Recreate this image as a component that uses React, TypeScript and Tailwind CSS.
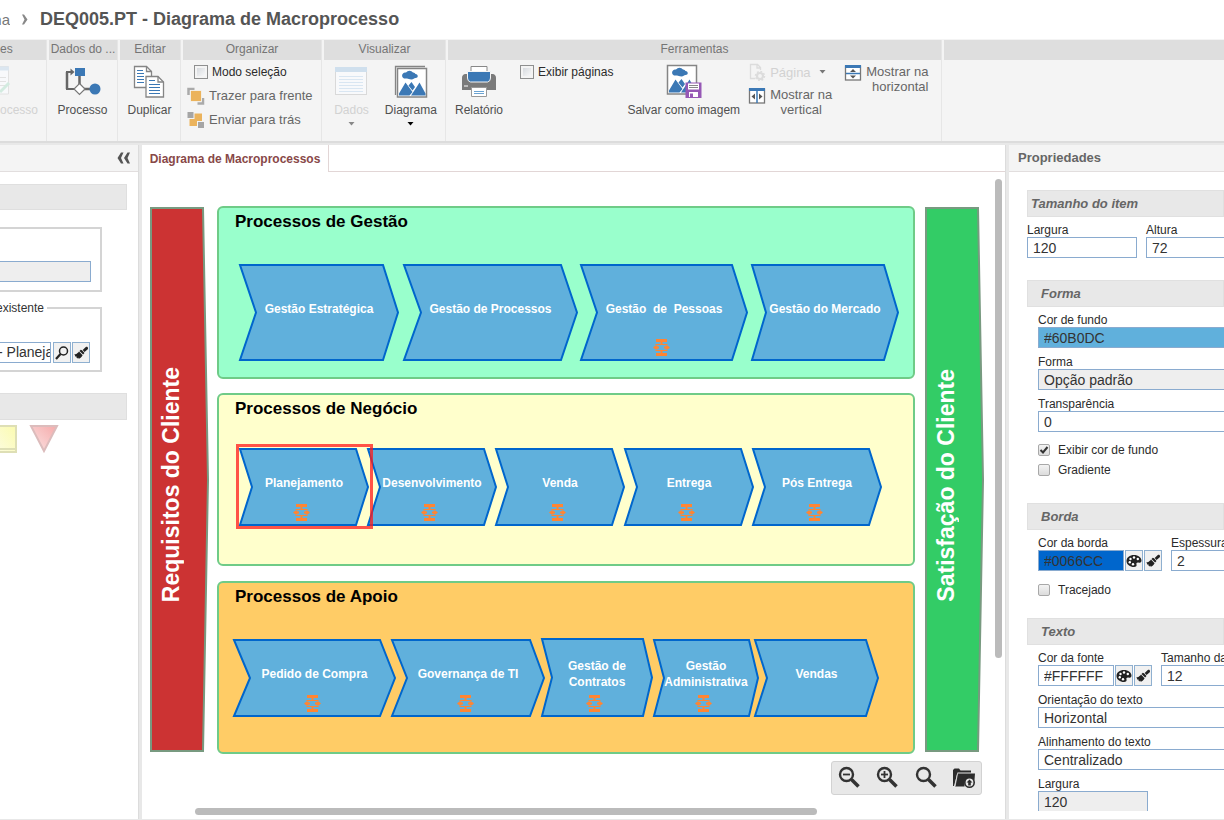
import type { ReactNode } from "react";

type ProcessNode = {
  label: string[];
  x: number;
  y: number;
  body: number;
  width: number;
  height: number;
  notch: number;
  sub?: boolean;
};

const processes: ProcessNode[] = [
  { label: ["Gestão Estratégica"], x: 97, y: 92, body: 144, width: 160, height: 97, notch: 17 },
  { label: ["Gestão de Processos"], x: 261, y: 92, body: 158, width: 175, height: 97, notch: 18 },
  { label: ["Gestão\u00a0 de\u00a0 Pessoas"], x: 438, y: 92, body: 152, width: 168, height: 97, notch: 17, sub: true },
  { label: ["Gestão do Mercado"], x: 609, y: 92, body: 133, width: 148, height: 97, notch: 15 },
  { label: ["Planejamento"], x: 97, y: 276, body: 117, width: 130, height: 78, notch: 13, sub: true },
  { label: ["Desenvolvimento"], x: 225, y: 276, body: 117, width: 130, height: 78, notch: 13, sub: true },
  { label: ["Venda"], x: 353, y: 276, body: 117, width: 130, height: 78, notch: 13, sub: true },
  { label: ["Entrega"], x: 482, y: 276, body: 117, width: 130, height: 78, notch: 13, sub: true },
  { label: ["Pós Entrega"], x: 610, y: 276, body: 117, width: 130, height: 78, notch: 13, sub: true },
  { label: ["Pedido de Compra"], x: 91, y: 467, body: 147, width: 163, height: 78, notch: 17, sub: true },
  { label: ["Governança de TI"], x: 249, y: 467, body: 139, width: 154, height: 78, notch: 16, sub: true },
  { label: ["Gestão de", "Contratos"], x: 399, y: 466, body: 102, width: 112, height: 79, notch: 11, sub: true },
  { label: ["Gestão", "Administrativa"], x: 511, y: 467, body: 96, width: 106, height: 78, notch: 11, sub: true },
  { label: ["Vendas"], x: 612, y: 467, body: 112, width: 125, height: 78, notch: 13 },
];

function SubprocessIcon() {
  return (
    <svg width="17" height="17" viewBox="0 0 17 17" aria-hidden="true">
      <g fill="#ff8533">
        <rect x="3" y="0" width="11" height="3" />
        <rect x="3" y="14" width="11" height="3" />
        <rect x="7.500" y="3" width="2" height="2" />
        <rect x="7.500" y="12" width="2" height="2" />
        <rect x="2.500" y="5" width="12" height="1" />
        <rect x="2.500" y="11" width="12" height="1" />
        <path d="M0 8.500 2.500 6.500h2V7.500H6v2H4.500v1h-2zM17 8.500l-2.500-2h-2V7.500H11v2h1.500v1h2z" />
      </g>
    </svg>
  );
}

function Process({ node }: { node: ProcessNode }) {
  const { x, y, body, width: w, height: h, notch } = node;
  return (
    <div className="absolute" style={{ left: x, top: y, width: w, height: h }}>
      <svg className="absolute inset-0 overflow-visible" width={w} height={h} aria-hidden="true">
        <polygon
          points={`1,1 ${body},1 ${w - 1},${h / 2} ${body},${h - 1} 1,${h - 1} ${notch},${h / 2}`}
          fill="#60b0dc"
          stroke="#0066cc"
          strokeWidth="2"
        />
      </svg>
      <div className="relative flex h-full flex-col items-center justify-center pb-2 text-center text-[12px] leading-4 font-bold whitespace-nowrap text-white">
        {node.label.map((line) => (
          <span key={line}>{line}</span>
        ))}
      </div>
      {node.sub && (
        <div className="absolute inset-x-0 bottom-[5px] flex justify-center pr-[5px]">
          <SubprocessIcon />
        </div>
      )}
    </div>
  );
}

function Lane({ title, className }: { title: string; className: string }) {
  return (
    <section className={`absolute left-[75px] h-[173px] w-[698px] rounded-md border-2 border-[#6fcb87] px-4 pt-1 ${className}`}>
      <h2 className="text-[17px] leading-5 font-bold text-black">{title}</h2>
    </section>
  );
}

function SideBar({ label, fill, className }: { label: string; fill: string; className: string }) {
  return (
    <div className={`absolute top-[35px] h-[546px] w-[60px] ${className}`}>
      <svg className="absolute inset-0" width="60" height="546" aria-hidden="true">
        <polygon points="1,1 53,1 58,273 53,544 1,544" fill={fill} stroke="#789a80" strokeWidth="2" />
      </svg>
      <div className="relative flex h-full w-[42px] items-center justify-center pt-[10px]">
        <span className="rotate-180 text-[23px] leading-6 font-bold whitespace-nowrap text-white [writing-mode:vertical-rl]">
          {label}
        </span>
      </div>
    </div>
  );
}

function Group({ title, className, children }: { title: string; className: string; children?: ReactNode }) {
  return (
    <section className={`flex shrink-0 flex-col overflow-hidden border-l border-[#e6e6e6] ${className}`}>
      <h2 className="ml-[2px] h-5 overflow-hidden bg-[#dedede] px-px text-center text-[12px] leading-[18px] text-ellipsis whitespace-nowrap text-[#757575]">
        {title}
      </h2>
      <div className="flex flex-1 items-start">{children}</div>
    </section>
  );
}

function BigButton({ label, icon, caret, disabled }: { label: string; icon: ReactNode; caret?: boolean; disabled?: boolean }) {
  return (
    <button type="button" disabled={disabled} className="flex flex-col items-center pt-1 text-[12px] leading-4 whitespace-nowrap text-[#505050] disabled:text-[#d2d2d2]">
      {icon}
      <span className="mt-1">{label}</span>
      {caret && <Caret className={disabled ? "mt-1 text-[#888]" : "mt-1 text-black"} />}
    </button>
  );
}

function Caret({ className }: { className: string }) {
  return (
    <svg className={className} width="7" height="4" viewBox="0 0 7 4" aria-hidden="true">
      <path d="M0.500 0h6L3.500 3.500z" fill="currentColor" />
    </svg>
  );
}

function RibbonCheck({ label }: { label: string }) {
  return (
    <label className="flex h-6 items-center gap-1 text-[12px] text-[#2b2b2b]">
      <input type="checkbox" className="size-[14px] appearance-none border border-[#8e8f8f] bg-linear-to-br from-[#cfd3d8] to-white shadow-[inset_0_0_0_2px_#f4f4f4]" />
      <span className="whitespace-nowrap">{label}</span>
    </label>
  );
}

function FlowIcon() {
  return (
    <svg width="36" height="34" viewBox="0 0 36 34" aria-hidden="true">
      <path d="M2 8v17M14.500 10v12M19 25h7" fill="none" stroke="#666" strokeWidth="2.500" />
      <path d="M1 8h5M1 25h9" fill="none" stroke="#666" strokeWidth="2" />
      <path d="M5.500 4.500 9.500 8l-4 3.500z" fill="#666" />
      <rect x="10" y="4" width="10" height="8" fill="#3b78b5" />
      <path d="M14.500 19.500 20 25l-5.500 5.500L9 25z" fill="#fff" stroke="#777" strokeWidth="1.200" />
      <circle cx="30" cy="25" r="5.500" fill="#3b78b5" />
    </svg>
  );
}

function CopyIcon() {
  return (
    <svg width="34" height="34" viewBox="0 0 34 34" aria-hidden="true">
      <g fill="#fff" stroke="#858585" strokeWidth="1.300">
        <path d="M2.500 2.500h12l5 5v16h-17z" />
        <path d="M14.500 2.500v5h5" fill="none" />
      </g>
      <path d="M5 6.500h6M5 9.500h7M5 12.500h7M5 15.500h7M5 18.500h7" stroke="#3b78b5" />
      <g fill="#fff" stroke="#858585" strokeWidth="1.300">
        <path d="M14 12.500h12l5.500 5.500v15H14z" />
        <path d="M26 12.500V18h5.500" fill="none" />
      </g>
      <path d="M17 16.500h6M17 20.500h11M17 23.500h11M17 26.500h11M17 29.500h11" stroke="#3b78b5" />
    </svg>
  );
}

function LayerIcon({ front }: { front?: boolean }) {
  return (
    <svg width="18" height="18" viewBox="0 0 18 18" aria-hidden="true">
      {front ? (
        <>
          <path d="M1.500 8V2h6M16 11v5.500h-5.500" fill="none" stroke="#aaa" strokeWidth="2.500" />
          <rect x="3.500" y="3.500" width="11" height="11" fill="#ebb35c" stroke="#f4f4f4" strokeWidth="0.800" />
        </>
      ) : (
        <>
          <rect x="2.500" y="2.500" width="12.500" height="12.500" fill="#ebb35c" />
          <rect x="0" y="0.500" width="7" height="7" fill="#a5a5a5" stroke="#f4f4f4" />
          <rect x="10.500" y="10.500" width="7" height="7" fill="#a5a5a5" stroke="#f4f4f4" />
        </>
      )}
    </svg>
  );
}

function DataIcon() {
  return (
    <svg width="34" height="34" viewBox="0 0 34 34" aria-hidden="true">
      <rect x="1.500" y="3.500" width="31" height="27" fill="#f8f9fb" stroke="#d9d9d9" />
      <rect x="1" y="3" width="32" height="5" fill="#cfdfed" />
      <path d="M5 12.500h24M5 15.500h24M5 18.500h24M5 21.500h24M5 24.500h24M5 27.500h24" stroke="#d9e6f2" />
    </svg>
  );
}

function PictureIcon({ save }: { save?: boolean }) {
  return (
    <svg width="36" height="34" viewBox="0 0 36 34" aria-hidden="true">
      {!save && <path d="M2.500 31V2.500H32" fill="none" stroke="#858585" strokeWidth="1.300" />}
      <rect x={save ? 1.5 : 4.5} y={save ? 1.5 : 4.5} width="29" height="28.500" fill="#fff" stroke="#858585" strokeWidth="1.500" />
      <g transform={save ? "translate(-3 -3)" : undefined} fill="#3b78b5">
        <path d="M11 14.500a3 3 0 0 1-1-5 3 3 0 0 1 3-1 4.500 4.500 0 0 1 7 0 2.500 2.500 0 0 1 2.500 1.500c3 .5 3 4 0 4-1.500 0-2 1.500-4 1.500-2.500 0-3-1-4.500-1z" />
        <path d="M6 31.500v-2l6.500-11 7 9.500-3 3.500zM15.500 21.500l3-3.500 3.500 5-2.500 3.500zM18 31.500l6-9 2.500-4 6 11v2z" />
      </g>
      {save && (
        <g>
          <rect x="19.500" y="18.500" width="16" height="15.500" fill="#9658b5" />
          <rect x="22" y="19.500" width="11" height="6" fill="#fff" />
          <path d="M23 21.500h9M23 23.500h9" stroke="#888" />
          <rect x="23" y="28" width="9" height="5" fill="#fff" />
          <rect x="24" y="29.500" width="3" height="3.500" fill="#9658b5" />
        </g>
      )}
    </svg>
  );
}

function PrinterIcon() {
  return (
    <svg width="36" height="34" viewBox="0 0 36 34" aria-hidden="true">
      <path d="M1 14a4 4 0 0 1 3-4h28a4 4 0 0 1 3 4v12H1z" fill="#7a7a7a" />
      <path d="M10 8V2.500h16V8" fill="#fff" stroke="#888" />
      <path d="M6.500 7.500h23v6.500a4 4 0 0 1-3 4h-17a4 4 0 0 1-3-4z" fill="#3b78b5" stroke="#f4f4f4" />
      <path d="M10.500 23.500h15v9h-15z" fill="#fff" stroke="#999" />
      <path d="M13 27.500h10M13 29.500h10" stroke="#6ba3d2" />
      <path d="M3 22h4" stroke="#fff" />
    </svg>
  );
}

function SplitIcon({ vertical }: { vertical?: boolean }) {
  return (
    <svg width="18" height="18" viewBox="0 0 18 18" className="shrink-0" aria-hidden="true">
      <rect x="1.500" y="2" width="15" height="14" fill="#fff" stroke="#777" strokeWidth="1.300" />
      <rect x="1" y="1" width="16" height="3" fill="#3b78b5" />
      {vertical ? (
        <>
          <path d="M9 4v12" stroke="#3b78b5" strokeWidth="1.500" />
          <path d="M7 6.500v6L3.500 9.500zM11 6.500v6l3.500-3z" fill="#555" />
        </>
      ) : (
        <>
          <path d="M2 9.500h14" stroke="#3b78b5" strokeWidth="1.500" />
          <path d="M6 8h6L9 5zM6 11.500h6l-3 3z" fill="#555" />
        </>
      )}
    </svg>
  );
}

function PageGearIcon() {
  return (
    <svg width="18" height="18" viewBox="0 0 18 18" aria-hidden="true">
      <path d="M7 15.500H2.500v-14h7l3 3V7M9 1.500v3.500h3.500" fill="none" stroke="#dcdcdc" strokeWidth="1.300" />
      <circle cx="12" cy="13" r="3" fill="none" stroke="#dcdcdc" strokeWidth="2.200" />
      <circle cx="12" cy="13" r="4.500" fill="none" stroke="#dcdcdc" strokeWidth="1.500" strokeDasharray="1.800 1.700" />
    </svg>
  );
}

function BrushIcon() {
  return (
    <svg width="16" height="16" viewBox="0 0 16 16" aria-hidden="true">
      <path d="M14.500 2c.8.800.7 1.800 0 2.600l-3 2.400-1.800-2L12.800 2c.6-.5 1.200-.5 1.700 0zM9 5.300l2.500 2.600-1.400 1.600-3.600-3.600 1.300-1.200zM6 6.600l3.600 3.600c-1 1.800-2.200 2.900-3.800 3.500L5 12.500l-.3 1-1.200-.8.200-1.200-1.100.2C2.100 11 1.700 10.200 1.500 9l1.300.2C4.100 8.700 5 7.900 6 6.600z" fill="#222" />
    </svg>
  );
}

function PaletteIcon() {
  return (
    <svg width="16" height="16" viewBox="0 0 16 16" aria-hidden="true">
      <path d="M8 2c4.300 0 7.500 2.500 7.500 5.500 0 2-1.500 2.500-3 2-1.500-.4-2.500.5-2 2 .5 1.300-.5 2.500-2.500 2.500-4 0-7.500-2.500-7.500-6S3.700 2 8 2z" fill="#222" />
      <g fill="#fff">
        <circle cx="4.500" cy="6" r="1.200" />
        <circle cx="8" cy="4.500" r="1.200" />
        <circle cx="11.800" cy="6" r="1.200" />
        <circle cx="3.800" cy="9.300" r="1.200" />
        <circle cx="7" cy="11.300" r="1.200" />
      </g>
    </svg>
  );
}

function LensIcon() {
  return (
    <svg width="16" height="16" viewBox="0 0 16 16" aria-hidden="true">
      <circle cx="9.500" cy="6" r="4" fill="none" stroke="#222" strokeWidth="1.500" />
      <path d="M6.500 9 2 14" stroke="#222" strokeWidth="2.200" />
    </svg>
  );
}

function ZoomIcon({ sign }: { sign?: "+" | "-" }) {
  return (
    <svg width="24" height="24" viewBox="0 0 24 24" aria-hidden="true">
      <circle cx="9.500" cy="8.500" r="6.500" fill="none" stroke="#333" strokeWidth="2.400" />
      <path d="M14.500 13.500 21.500 20.500" stroke="#333" strokeWidth="3.600" />
      {sign && <path d="M6 8.500h7" stroke="#333" strokeWidth="1.800" />}
      {sign === "+" && <path d="M9.500 5v7" stroke="#333" strokeWidth="1.800" />}
    </svg>
  );
}

function FolderIcon() {
  return (
    <svg width="24" height="24" viewBox="0 0 24 24" aria-hidden="true">
      <path d="M1 20V4l1.500-1.500H7L8.500 4.500H19V6.500H5.500L2 20z" fill="#2b2b2b" />
      <path d="M5.500 7.500H23l-.5 6.500-5-2-5 4v4.500H3z" fill="#2b2b2b" />
      <path d="M3 20.500 5.500 7.500" stroke="#e8e8e8" strokeWidth="0.800" />
      <circle cx="17.500" cy="16.500" r="4.700" fill="#e8e8e8" stroke="#2b2b2b" strokeWidth="1.600" />
      <path d="M17.500 13.500l3 3h-1.700v3h-2.600v-3h-1.700z" fill="#2b2b2b" />
    </svg>
  );
}

function IconButton({ label, children }: { label: string; children: ReactNode }) {
  return (
    <button type="button" aria-label={label} className="flex h-[21px] w-[18px] shrink-0 items-center justify-center border border-[#8fb0d0] bg-[#f1f1f1]">
      {children}
    </button>
  );
}

const inputBase = "h-[21px] border border-[#8aabcf] pl-[5px] text-[14px] leading-4 text-[#333] outline-none";

function Field({ id, label, value, className, inputClass, children }: { id: string; label: string; value: string; className?: string; inputClass: string; children?: ReactNode }) {
  return (
    <div className={`shrink-0 ${className ?? ""}`}>
      <label htmlFor={id} className="block h-[14px] text-[12px] leading-[14px] whitespace-nowrap text-[#2b2b2b]">
        {label}
      </label>
      <div className="flex gap-px">
        <input id={id} defaultValue={value} className={`${inputBase} ${inputClass}`} />
        {children}
      </div>
    </div>
  );
}

function PropCheck({ label, checked }: { label: string; checked?: boolean }) {
  return (
    <label className="flex h-5 items-center gap-2 text-[12px] text-[#2b2b2b]">
      <span className="relative flex size-[12px]">
        <input type="checkbox" defaultChecked={checked} className="size-full appearance-none rounded-[2px] border border-[#a8a8a8] bg-linear-to-b from-[#f3f3f3] to-[#dcdcdc]" />
        {checked && (
          <svg className="absolute inset-0" width="12" height="12" viewBox="0 0 12 12" aria-hidden="true">
            <path d="M2.500 6 5 8.500 9.500 3" fill="none" stroke="#333" strokeWidth="2" />
          </svg>
        )}
      </span>
      <span>{label}</span>
    </label>
  );
}

function SectionTitle({ children, className }: { children: ReactNode; className: string }) {
  return <h3 className={`h-[27px] shrink-0 border border-[#e0e0e0] bg-[#e8e8e8] text-[13px] leading-[25px] font-bold text-[#666] italic ${className}`}>{children}</h3>;
}

function PanelTitle({ children, className }: { children?: ReactNode; className?: string }) {
  return <header className={`flex h-[27px] shrink-0 items-center border-b border-[#e2dede] bg-[#f4f4f4] ${className ?? ""}`}>{children}</header>;
}

export default function App() {
  return (
    <div className="flex h-screen flex-col overflow-hidden bg-white font-['Liberation_Sans',Arial,sans-serif]">
      <nav className="flex h-[39px] shrink-0 items-center gap-3 text-[#777]">
        <a href="#" className="flex w-[10px] justify-end overflow-hidden text-[15px] leading-5">na</a>
        <svg className="shrink-0" width="6" height="11" viewBox="0 0 6 11" aria-hidden="true">
          <path d="M0 .5h2L5.500 5.500 2 10.500H0L2.500 5.500z" fill="#888" />
        </svg>
        <h1 className="text-[18px] font-bold whitespace-nowrap text-[#555]">DEQ005.PT - Diagrama de Macroprocesso</h1>
      </nav>

      <div className="flex h-[104px] shrink-0 overflow-hidden border-b-2 border-[#dcdcdc] bg-[#f4f4f4] pt-px">
        <section className="w-[46px] shrink-0 overflow-hidden text-[12px]">
          <h2 className="h-5 bg-[#dedede] leading-[18px] text-[#757575]">es</h2>
          <button type="button" disabled className="block pt-1 text-left leading-4 text-[#d2d2d2]">
            <svg width="12" height="34" viewBox="0 0 12 34" aria-hidden="true">
              <path d="M0 2.500h8.500V30H0" fill="#f8f9fb" stroke="#e2e2e2" />
              <path d="M0 2.500h9v4H0z" fill="#dbe6f0" />
              <path d="M0 13.500h6M0 17.500h6M0 21.500h6" stroke="#e2e2e2" />
              <path d="M0 28 9 19" stroke="#d3ebe0" strokeWidth="3" />
            </svg>
            <span className="mt-1 block">ocesso</span>
          </button>
        </section>
        <Group title="Dados do ..." className="w-[71px]">
          <div className="flex w-full justify-center pl-px"><BigButton label="Processo" icon={<FlowIcon />} /></div>
        </Group>
        <Group title="Editar" className="w-[63px]">
          <div className="flex w-full justify-center pl-px"><BigButton label="Duplicar" icon={<CopyIcon />} /></div>
        </Group>
        <Group title="Organizar" className="w-[141px]">
          <div className="flex flex-col pl-[6px] text-[13px] text-[#666]">
            <div className="pl-[7px]"><RibbonCheck label="Modo seleção" /></div>
            <button type="button" className="flex h-6 items-center gap-1 whitespace-nowrap"><LayerIcon front />Trazer para frente</button>
            <button type="button" className="flex h-6 items-center gap-1 whitespace-nowrap"><LayerIcon />Enviar para trás</button>
          </div>
        </Group>
        <Group title="Visualizar" className="w-[124px]">
          <div className="flex w-full justify-center gap-4 pl-1">
            <BigButton label="Dados" icon={<DataIcon />} caret disabled />
            <BigButton label="Diagrama" icon={<PictureIcon />} caret />
          </div>
        </Group>
        <Group title="Ferramentas" className="w-[496px]">
          <div className="ml-[9px]"><BigButton label="Relatório" icon={<PrinterIcon />} /></div>
          <div className="ml-[17px]"><RibbonCheck label="Exibir páginas" /></div>
          <div className="ml-[14px]"><BigButton label="Salvar como imagem" icon={<PictureIcon save />} /></div>
          <div className="ml-2 text-[13px] leading-[15px] text-[#666]">
            <button type="button" disabled className="flex h-6 items-center gap-1 text-[#d2d2d2]">
              <PageGearIcon />Página<Caret className="ml-1 text-[#777]" />
            </button>
            <button type="button" className="mt-[3px] flex items-start gap-1"><SplitIcon vertical /><span>Mostrar na<br />vertical</span></button>
          </div>
          <button type="button" className="mt-1 ml-3 flex items-start gap-1 text-right text-[13px] leading-[15px] text-[#666]">
            <SplitIcon /><span>Mostrar na<br />horizontal</span>
          </button>
        </Group>
        <section className="flex-1 border-l border-[#e6e6e6]"><div className="ml-[2px] h-5 bg-[#dedede]" /></section>
      </div>

      <main className="flex min-h-0 flex-1 bg-[#e8e8e8] pt-[2px] pb-px">
        <aside className="flex w-[139px] shrink-0 flex-col border-r border-[#dcdcdc] bg-white">
          <PanelTitle className="justify-end pr-[7px]">
            <button type="button" aria-label="Recolher painel">
              <svg width="14" height="12" viewBox="0 0 14 12" aria-hidden="true">
                <path d="M4 .500h2.500L4 6l2.500 5.500H4L.500 6zM10.500.500H13L10.500 6l2.500 5.500h-2.500L7 6z" fill="#555" />
              </svg>
            </button>
          </PanelTitle>
          <div className="flex flex-1 flex-col overflow-hidden pt-3 pr-[11px]">
            <div className="h-[26px] border border-l-0 border-[#dfdfdf] bg-[#e8e8e8]" />
            <fieldset className="mt-[17px] mr-[25px] h-[65px] min-w-0 border-2 border-l-0 border-[#d4d4d4] pt-8 pr-[9px]">
              <input aria-label="Nome" readOnly className="block h-[21px] w-full border border-l-0 border-[#8aabcf] bg-[#eee]" />
            </fieldset>
            <fieldset className="mt-2 mr-[25px] h-[72px] min-w-0 border-2 border-l-0 border-[#d4d4d4] pr-[10px]">
              <legend className="-ml-1 pr-[3px] text-[12px] leading-4 text-[#333]">existente</legend>
              <div className="flex gap-px pt-[26px]">
                <input aria-label="Processo existente" defaultValue="- Planeja" className="mr-px h-[21px] min-w-0 flex-1 border border-l-0 border-[#8aabcf] text-[14px] text-[#333] [text-indent:-2px]" />
                <IconButton label="Pesquisar"><LensIcon /></IconButton>
                <IconButton label="Limpar"><BrushIcon /></IconButton>
              </div>
            </fieldset>
            <div className="mt-[21px] h-[27px] border border-l-0 border-[#dfdfdf] bg-[#e8e8e8]" />
            <svg className="mt-1" width="70" height="32" viewBox="0 0 70 32" aria-hidden="true">
              <defs>
                <linearGradient id="note" x1="0" y1="1" x2="1" y2="0"><stop offset="0" stopColor="#fcfce0" /><stop offset="1" stopColor="#fbfbb0" /></linearGradient>
                <linearGradient id="tri" x1="0" y1="1" x2="1" y2="0"><stop offset="0" stopColor="#fbe4e4" /><stop offset="1" stopColor="#f5aaaa" /></linearGradient>
              </defs>
              <path d="M-4 2h20v26H-4z" fill="url(#note)" stroke="#dedfb5" strokeWidth="2" />
              <path d="M0 25h16" stroke="#dedfb5" strokeWidth="2" />
              <path d="M31 2h26L44 27z" fill="url(#tri)" stroke="#dcbcbc" strokeWidth="2" />
            </svg>
          </div>
        </aside>

        <section className="ml-[3px] flex min-w-0 flex-1 flex-col border-r border-[#dcdcdc] bg-white">
          <div className="flex h-[27px] shrink-0">
            <button type="button" className="w-[187px] border-r border-[#e2d6d6] text-center text-[12px] leading-6 font-bold whitespace-nowrap text-[#884848]">
              Diagrama de Macroprocessos
            </button>
            <div className="flex-1 border-b border-[#e2d6d6]" />
          </div>
          <div className="relative flex-1 overflow-hidden">
            <SideBar label="Requisitos do Cliente" fill="#cc3333" className="left-2" />
            <Lane title="Processos de Gestão" className="top-[34px] bg-[#99ffcc]" />
            <Lane title="Processos de Negócio" className="top-[221px] bg-[#ffffcc]" />
            <Lane title="Processos de Apoio" className="top-[409px] bg-[#ffcc66]" />
            <SideBar label="Satisfação do Cliente" fill="#33cc66" className="left-[783px]" />
            {processes.map((p) => (
              <Process key={p.label.join(" ")} node={p} />
            ))}
            <div className="absolute top-[272px] left-[94px] h-[85px] w-[137px] border-[3px] border-[#ff1a1a]/75" />
            <div className="absolute top-[7px] right-[3px] h-[479px] w-[7px] rounded-full bg-[#bbb]" />
            <div className="absolute bottom-1 left-[53px] h-[7px] w-[622px] rounded-full bg-[#bbb]" />
            <div className="absolute right-[23px] bottom-6 flex h-[34px] w-[151px] items-center justify-between rounded-[3px] border border-[#d2d2d2] bg-[#e8e8e8] px-[5px]">
              <button type="button" aria-label="Reduzir"><ZoomIcon sign="-" /></button>
              <button type="button" aria-label="Ampliar"><ZoomIcon sign="+" /></button>
              <button type="button" aria-label="Zoom padrão"><ZoomIcon /></button>
              <button type="button" aria-label="Abrir pasta"><FolderIcon /></button>
            </div>
          </div>
        </section>

        <aside className="ml-[3px] flex w-[215px] shrink-0 flex-col overflow-hidden bg-white">
          <PanelTitle className="pl-[9px] text-[13px] font-bold text-[#666]">Propriedades</PanelTitle>
          <div className="mb-2 flex flex-1 flex-col overflow-hidden pt-[18px] pl-[18px]">
            <SectionTitle className="pl-[3px]">Tamanho do item</SectionTitle>
            <div className="mt-[6px] flex gap-[9px]">
              <Field id="item-width" label="Largura" value="120" inputClass="w-[110px]" />
              <Field id="item-height" label="Altura" value="72" inputClass="w-[110px]" />
            </div>
            <SectionTitle className="mt-[22px] pl-[13px]">Forma</SectionTitle>
            <div className="flex shrink-0 flex-col gap-[7px] pt-[6px] pl-[11px]">
              <Field id="fill" label="Cor de fundo" value="#60B0DC" inputClass="w-[230px] bg-[#60b0dc]" />
              <Field id="shape" label="Forma" value="Opção padrão" inputClass="w-[230px] bg-[#eee]" />
              <Field id="alpha" label="Transparência" value="0" inputClass="w-[230px]" />
            </div>
            <div className="shrink-0 pt-2 pl-[11px]">
              <PropCheck label="Exibir cor de fundo" checked />
              <PropCheck label="Gradiente" />
            </div>
            <SectionTitle className="mt-[23px] pl-[13px]">Borda</SectionTitle>
            <div className="flex shrink-0 gap-[9px] pt-[6px] pl-[11px]">
              <Field id="stroke" label="Cor da borda" value="#0066CC" inputClass="w-[86px] bg-[#0066cc]">
                <IconButton label="Paleta da borda"><PaletteIcon /></IconButton>
                <IconButton label="Limpar cor da borda"><BrushIcon /></IconButton>
              </Field>
              <Field id="thickness" label="Espessura" value="2" inputClass="w-[100px]" />
            </div>
            <div className="shrink-0 pt-[9px] pl-[11px]"><PropCheck label="Tracejado" /></div>
            <SectionTitle className="mt-[18px] pl-[13px]">Texto</SectionTitle>
            <div className="flex shrink-0 flex-col gap-[7px] pt-[6px] pl-[11px]">
              <div className="flex gap-[9px]">
                <Field id="font-color" label="Cor da fonte" value="#FFFFFF" inputClass="w-[76px]">
                  <IconButton label="Paleta da fonte"><PaletteIcon /></IconButton>
                  <IconButton label="Limpar cor da fonte"><BrushIcon /></IconButton>
                </Field>
                <Field id="font-size" label="Tamanho da" value="12" inputClass="w-[100px]" />
              </div>
              <Field id="orientation" label="Orientação do texto" value="Horizontal" inputClass="w-[230px]" />
              <Field id="align" label="Alinhamento do texto" value="Centralizado" inputClass="w-[230px]" />
              <Field id="text-width" label="Largura" value="120" inputClass="w-[110px] bg-[#eee]" />
            </div>
          </div>
        </aside>
      </main>
    </div>
  );
}
